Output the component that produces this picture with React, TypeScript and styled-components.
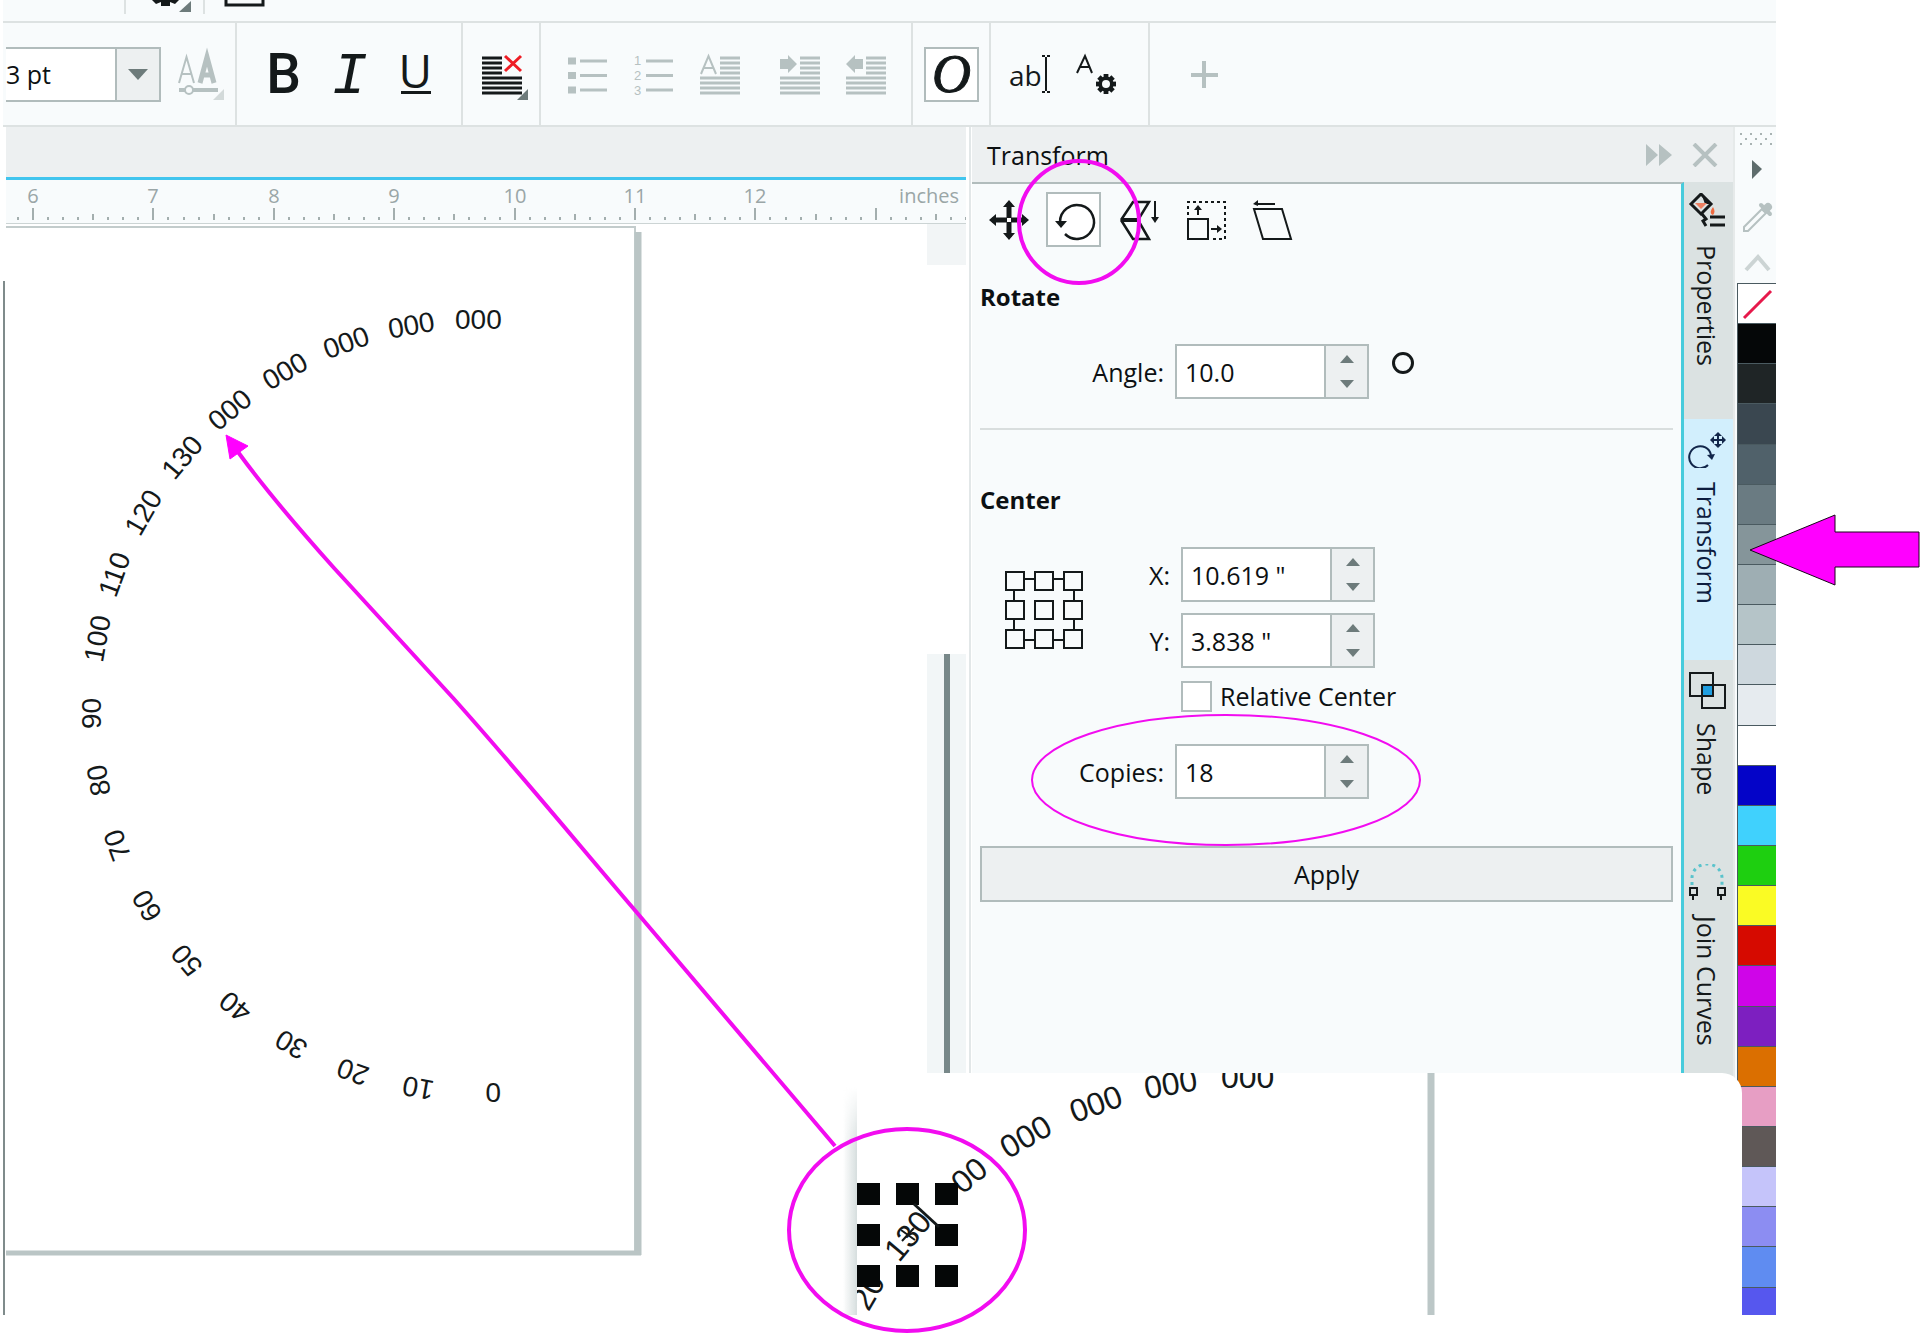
import React from "react";
import styled, { createGlobalStyle } from "styled-components";

const ink = "#14191a";
const muted = "#b6c1c1";
const line = "#dde2e2";
const surface = "#f8fbfc";
const chrome = "#edf0f1";
const edge = "#b1bcbc";
const sans = '"Open Sans", "Noto Sans", sans-serif';

const GlobalStyle = createGlobalStyle`
  *, *::before, *::after { box-sizing: border-box; }
  body { margin: 0; background: #fff; color: #0c1012; font: 25px/32px ${sans}; }
  button, input, select { font: inherit; color: inherit; margin: 0; padding: 0; border: 0; border-radius: 0; background: none; }
  svg { display: block; flex: none; }
`;

const Stage = styled.main`
  position: relative;
  height: 100vh;
  min-height: 1200px;
  overflow: hidden;
  padding: 0 144px 18px 3px;
`;

const Window = styled.div`
  display: flex;
  flex-direction: column;
  height: 100%;
`;

const TopBar = styled.div`
  display: flex;
  height: 23px;
  background: ${surface};
  border-bottom: 2px solid ${line};
`;

const TextBar = styled.div`
  display: flex;
  height: 104px;
  background: ${surface};
  border-bottom: 2px solid ${line};
`;

const Group = styled.div<{ $pad?: string; $last?: boolean }>`
  display: flex;
  align-items: center;
  gap: 12px;
  padding: 0 ${(p) => p.$pad ?? "19px"};
  border-right: ${(p) => (p.$last ? "0" : `2px solid ${line}`)};
`;

const SizeBox = styled.div`
  display: grid;
  grid-template-columns: 109px 44px;
  height: 55px;
  background: #fff;
  border: 2px solid ${edge};
  border-left: 0;
`;

const SizeSelect = styled.select`
  grid-area: 1 / 1 / 2 / 3;
  appearance: none;
  outline: 0;
`;

const SizeArrow = styled.span`
  grid-area: 1 / 2;
  display: flex;
  align-items: center;
  justify-content: center;
  background: ${chrome};
  border-left: 2px solid ${edge};
  pointer-events: none;
`;

const Tool = styled.button<{ $on?: boolean; $apart?: boolean }>`
  display: flex;
  align-items: center;
  justify-content: center;
  width: 55px;
  height: 55px;
  margin-right: -1px;
  margin-left: ${(p) => (p.$apart ? "14px" : "0")};
  color: ${ink};
  background: ${(p) => (p.$on ? "#fff" : "none")};
  box-shadow: ${(p) => (p.$on ? `inset 0 0 0 2px ${edge}` : "none")};
`;

const Glyph = styled.span<{ $face: string; $size: number; $weight?: number; $italic?: boolean; $bold?: boolean; $low?: boolean }>`
  padding-top: ${(p) => (p.$low ? "6px" : "0")};
  font-family: ${(p) => p.$face};
  font-size: ${(p) => p.$size}px;
  font-weight: ${(p) => p.$weight ?? 400};
  font-style: ${(p) => (p.$italic ? "italic" : "normal")};
  line-height: 54px;
  -webkit-text-stroke: ${(p) => (p.$bold ? "1px" : "0")} ${ink};
`;

const UnderGlyph = styled.span`
  width: 30px;
  height: 40px;
  border-bottom: 3px solid ${ink};
  font: 500 46px/32px ${sans};
  text-align: center;
  text-indent: -2px;
`;

const Work = styled.div`
  display: flex;
  flex: 1;
  min-height: 0;
`;

const Drawing = styled.section`
  display: flex;
  flex-direction: column;
  flex: 1;
  min-width: 0;
`;

const DocTabs = styled.div`
  height: 53px;
  margin-left: 3px;
  background: ${chrome};
  border-bottom: 3px solid #41c5ee;
`;

const Ruler = styled.div`
  height: 44px;
  margin-left: 3px;
  overflow: hidden;
  background: ${surface};
  border-bottom: 1px solid #ccd4d4;
`;

const CanvasRow = styled.div`
  display: flex;
  flex: 1;
  min-height: 0;
`;

const CanvasView = styled.div`
  flex: 1;
  min-width: 0;
  overflow: hidden;
`;

const ScrollTrack = styled.div`
  display: flex;
  flex-direction: column;
  justify-content: space-between;
  width: 39px;
`;

const ScrollCap = styled.div`
  height: 41px;
  background: #f2f5f6;
`;

const ScrollTail = styled.div`
  display: flex;
  justify-content: center;
  height: 661px;
  padding-bottom: 242px;
  background: linear-gradient(#f2f6f7 419px, #fff 419px);
`;

const ScrollThumb = styled.div`
  width: 6px;
  height: 100%;
  background: #788889;
`;

const Splitter = styled.div`
  width: 6px;
  background: linear-gradient(90deg, #fff 3px, #e2e7e8 3px, #e2e7e8 5px, #fff 5px);
`;

const Docker = styled.aside`
  display: flex;
  flex-direction: column;
  width: 761px;
`;

const DockHead = styled.header`
  display: flex;
  align-items: center;
  height: 55px;
  padding: 0 15px 0 15px;
  background: ${chrome};
`;

const DockTitle = styled.h1`
  flex: 1;
  margin: 0;
  font: inherit;
`;

const HeadButton = styled.button`
  display: flex;
  margin-left: 20px;
`;

const DockBody = styled.div`
  display: flex;
  flex: 1;
  min-height: 0;
`;

const Panel = styled.form`
  display: flex;
  flex-direction: column;
  flex: 1;
  padding: 8px 8px 0;
  background: ${surface};
  border-top: 2px solid ${edge};
  border-right: 3px solid #47cbdc;
`;

const ToolRow = styled.div`
  display: flex;
  gap: 12px;
`;

const Heading = styled.h2<{ $top: number }>`
  margin: ${(p) => p.$top}px 0 31px;
  font-size: 24px;
  line-height: 32px;
  font-weight: 700;
`;

const Field = styled.div`
  display: flex;
  align-items: center;
  gap: 11px;
`;

const FieldLabel = styled.label<{ $width: number }>`
  width: ${(p) => p.$width}px;
  text-align: right;
`;

const SpinBox = styled.div`
  display: grid;
  grid-template-columns: 1fr 43px;
  width: 194px;
  height: 55px;
  background: #fff;
  border: 2px solid ${edge};
`;

const SpinInput = styled.input`
  width: 100%;
  min-width: 0;
  padding-left: 8px;
  outline: 0;
`;

const SpinButtons = styled.div`
  display: grid;
  grid-template-rows: 1fr 1fr;
  background: ${chrome};
  border-left: 2px solid ${edge};
`;

const SpinButton = styled.button`
  display: flex;
  align-items: center;
  justify-content: center;
`;

const Degree = styled.span`
  width: 22px;
  height: 22px;
  margin: 0 0 18px 12px;
  border: 3px solid ${ink};
  border-radius: 50%;
`;

const Divider = styled.hr`
  width: 100%;
  height: 2px;
  margin: 29px 0 0;
  border: 0;
  background: #d9dede;
`;

const CenterRow = styled.div`
  display: flex;
  align-items: center;
  padding-left: 25px;
`;

const CenterFields = styled.div`
  display: flex;
  flex-direction: column;
  gap: 11px;
`;

const CheckRow = styled.label`
  display: flex;
  align-items: center;
  gap: 8px;
  height: 32px;
  margin: 12px 0 32px 201px;
`;

const CheckBox = styled.input`
  appearance: none;
  width: 31px;
  height: 31px;
  background: #fff;
  border: 2px solid ${edge};
`;

const Apply = styled.button`
  height: 56px;
  margin-top: 47px;
  background: ${chrome};
  border: 2px solid ${edge};
`;

const TabStrip = styled.nav`
  display: flex;
  flex-direction: column;
  width: 49px;
  background: #dbe2e2;
`;

const SideTab = styled.button<{ $h: number; $on?: boolean }>`
  display: flex;
  flex-direction: column;
  align-items: center;
  gap: 14px;
  height: ${(p) => p.$h}px;
  padding: 11px 4px 0 0;
  color: ${(p) => (p.$on ? "#0d1d3f" : ink)};
  background: ${(p) => (p.$on ? "#d2effd" : "#dbe2e2")};
`;

const SideText = styled.span`
  writing-mode: vertical-rl;
  line-height: 32px;
`;

const Palette = styled.div`
  display: flex;
  flex-direction: column;
  width: 43px;
  padding-left: 4px;
  background: linear-gradient(90deg, #e6eaea 2px, ${surface} 2px);
`;

const PaletteTools = styled.div`
  height: 156px;
`;

const Swatch = styled.button<{ $c: string; $part?: boolean }>`
  flex: ${(p) => (p.$part ? 28 : 40)} 1 0;
  overflow: hidden;
  background: ${(p) => p.$c};
  border-top: 1px solid #4a5a60;
  border-left: 1px solid #4a5a60;
`;

const Inset = styled.div`
  position: absolute;
  left: 857px;
  bottom: 18px;
  width: 885px;
  height: 242px;
  overflow: hidden;
  background: #fff;
  border-radius: 18px 20px 0 0;
`;

const InsetShadow = styled.div`
  position: absolute;
  left: 843px;
  bottom: 18px;
  width: 14px;
  height: 228px;
  background: linear-gradient(90deg, rgba(214, 222, 222, 0), #d6dede);
  mask-image: linear-gradient(transparent, #000 60px);
`;

const Notes = styled.svg`
  position: absolute;
  left: 0;
  top: 0;
  pointer-events: none;
`;

function Tri({ up }: { up?: boolean }) {
  return (
    <svg width="14" height="8" viewBox="0 0 14 8">
      <path d={up ? "M0 8 7 0l7 8z" : "M0 0h14L7 8z"} fill="#6d7b7b" />
    </svg>
  );
}

function Spin({ id, value, name }: { id: string; value: string; name: string }) {
  return (
    <SpinBox>
      <SpinInput id={id} defaultValue={value} />
      <SpinButtons>
        <SpinButton type="button" aria-label={`Increase ${name}`}><Tri up /></SpinButton>
        <SpinButton type="button" aria-label={`Decrease ${name}`}><Tri /></SpinButton>
      </SpinButtons>
    </SpinBox>
  );
}

const Box = ({ children }: { children: React.ReactNode }) => (
  <svg width="54" height="54" viewBox="0 0 54 54" fill="none" stroke={muted} strokeWidth="3">{children}</svg>
);

const paragraph = (from: number) =>
  `M${from} 11H47M${from} 16H47M${from} 21H47M${from} 26H47M7 31H47M7 36H47M7 41H47M7 46H47`;

const Cog = ({ x, y }: { x: number; y: number }) => (
  <g transform={`translate(${x} ${y})`} stroke="none" fill={ink}>
    {[0, 45, 90, 135].map((a) => (
      <rect key={a} x="-2.4" y="-10" width="4.8" height="20" transform={`rotate(${a})`} />
    ))}
    <circle r="7.6" />
    <circle r="4" fill={surface} />
  </g>
);

function Toolbar() {
  return (
    <TextBar>
      <Group $pad="8px 0 3px">
        <SizeBox>
          <SizeSelect aria-label="Font size" defaultValue="3 pt"><option>3 pt</option></SizeSelect>
          <SizeArrow>
            <svg width="20" height="11" viewBox="0 0 20 11"><path d="M0 0h20L10 11z" fill="#6d7b7b" /></svg>
          </SizeArrow>
        </SizeBox>
        <Tool aria-label="Variable font">
          <svg width="54" height="54" viewBox="2 0 54 54" fill="none" stroke={muted}>
            <path d="M7 36 14.500 10 22 36M10 27h9" strokeWidth="2" />
            <path d="M28 36 35 10l7 26M30 28h10" strokeWidth="5" />
            <path d="M7 43h39" strokeWidth="4" />
            <circle cx="17" cy="43" r="4" fill={surface} strokeWidth="2" />
            <path d="M52 42v11H41z" fill="#d3dada" stroke="none" />
          </svg>
        </Tool>
      </Group>
      <Group>
        <Tool aria-label="Bold"><Glyph $face="Roboto, sans-serif" $size={55} $weight={500}>B</Glyph></Tool>
        <Tool aria-label="Italic"><Glyph $face='"Liberation Mono", monospace' $size={60} $italic $low>I</Glyph></Tool>
        <Tool aria-label="Underline"><UnderGlyph>U</UnderGlyph></Tool>
      </Group>
      <Group $pad="11px">
        <Tool aria-label="Text alignment">
          <Box>
            <path d="M7 11H27M7 16H27M7 21H27M7 26H27M7 31H47M7 36H47M7 41H47M7 46H47" stroke={ink} />
            <path d="m30 9 16 15M46 9 30 24" stroke="#ee1c24" />
            <path d="M53 42v11H42z" fill="#6d7b7b" stroke="none" />
          </Box>
        </Tool>
      </Group>
      <Group>
        <Tool aria-label="Bulleted list">
          <Box>
            <path d="M7 14h8M7 28.500h8M7 43h8" strokeWidth="7" />
            <path d="M19 14h27M19 28.500h27M19 43h27" />
          </Box>
        </Tool>
        <Tool aria-label="Numbered list">
          <Box>
            <g fill={muted} stroke="none" fontFamily="Liberation Sans" fontSize="13">
              <text x="7" y="18">1</text><text x="7" y="33">2</text><text x="7" y="48">3</text>
            </g>
            <path d="M19 14h27M19 28.500h27M19 43h27" />
          </Box>
        </Tool>
        <Tool aria-label="Drop cap">
          <Box><path d={paragraph(27)} /><path d="M8 27 15.500 9 23 27M11 21h9" strokeWidth="2" /></Box>
        </Tool>
        <Tool aria-label="Increase indent" $apart>
          <Box><path d={paragraph(27)} /><path d="M7 12h8V8l9 9-9 9v-4H7z" fill={muted} stroke="none" /></Box>
        </Tool>
        <Tool aria-label="Decrease indent">
          <Box><path d={paragraph(27)} /><path d="M24 12h-8V8l-9 9 9 9v-4h8z" fill={muted} stroke="none" /></Box>
        </Tool>
      </Group>
      <Group $pad="11px">
        <Tool aria-label="OpenType" $on><Glyph $face='"Liberation Serif", serif' $size={54} $italic $bold>O</Glyph></Tool>
      </Group>
      <Group $pad="26px 0 11px">
        <Tool aria-label="Edit text">
          <Box>
            <text x="6" y="39" fontFamily="Open Sans" fontSize="28" fill={ink} stroke="none">ab</text>
            <path d="M43 10V44M39 9h3M44 9h3M39 45h3M44 45h3" stroke={ink} strokeWidth="2" />
          </Box>
        </Tool>
        <Tool aria-label="Text settings">
          <Box>
            <path d="M8 26 16 9l7 17M11 20h10" stroke={ink} strokeWidth="2" />
            <Cog x={37} y={37} />
          </Box>
        </Tool>
      </Group>
      <Group $pad="26px" $last>
        <Tool aria-label="Customize"><Box><path d="M14 28h27M27 14v27" strokeWidth="4" /></Box></Tool>
      </Group>
    </TextBar>
  );
}

const tens = ["0", "10", "20", "30", "40", "50", "60", "70", "80", "90", "100", "110"];
const pageLabels = [...tens, "120", "130", "000", "000", "000", "000", "000"];
// The enlarged view hides the first digit of the labels beside the selection handles.
const insetLabels = [...tens, "\u200720", "130", "\u200700", "000", "000", "000", "000"];

function Dial({ cx, cy, r, size, labels, from = 0 }: { cx: number; cy: number; r: number; size: number; labels: string[]; from?: number }) {
  const half = Math.round(size * 0.834);
  return (
    <g fontFamily="Liberation Sans, Arial, sans-serif" fontSize={size} fill={ink}>
      {labels.map((t, i) =>
        i < from ? null : (
          <text key={i} x={cx - half} y={cy - r + Math.round(size * 0.36)} transform={`rotate(${i * 10 - 180} ${cx} ${cy})`}>{t}</text>
        )
      )}
    </g>
  );
}

function RulerScale() {
  const ticks = Array.from({ length: 64 }, (_, i) => {
    const x = Math.round(27 + (i - 1) * 15.05);
    const k = (i - 1) % 8;
    return `M${x} ${k === 0 ? 28 : k === 4 ? 34 : 37}V40`;
  });
  return (
    <svg width="960" height="43" viewBox="0 0 960 43" fontFamily="Open Sans" fontSize="20" fill="#9aa6a7">
      <path d={ticks.join("")} stroke="#a3aeae" strokeWidth="2" />
      {[6, 7, 8, 9, 10, 11, 12].map((n, i) => (
        <text key={n} x={Math.round(27 + i * 120.4)} y="23" textAnchor="middle">{n}</text>
      ))}
      <text x="953" y="23" textAnchor="end">inches</text>
    </svg>
  );
}

const tools: [string, React.ReactNode][] = [
  ["Position", <g key="p"><path d="M28 10v34M11 27h34" strokeWidth="5" /><path d="m28 7 6 7H22zM28 47l6-7H22zM8 27l7-6v12zM48 27l-7-6v12z" fill={ink} stroke="none" /><path d="M26 25h4v4h-4z" fill="#fff" stroke="none" /></g>],
  ["Rotate", <g key="r"><path d="M13 29A17 17 0 1 1 18 41" strokeWidth="2.500" /><path d="M8 28h12l-6 7z" fill={ink} stroke="none" /></g>],
  ["Scale and mirror", <g key="m"><path d="M8 27 20 9h16L25 27l11 19H20L8 27" strokeWidth="2.500" /><path d="M8 27h16" strokeWidth="4" /><path d="M42 8v18" /><path d="M38 24h8l-4 6z" fill={ink} stroke="none" /></g>],
  ["Size", <g key="s"><path d="M9 26h20v20H9z" /><path d="M9 22V9h37v37H32" strokeDasharray="3 3" /><path d="M19 22v-7M32 36h6" strokeWidth="2" /><path d="m19 12 4 5h-8zM43 36l-5-4v8z" fill={ink} stroke="none" /></g>],
  ["Skew", <g key="k"><path d="M9 16h28l9 30H18z" /><path d="M11 11h19" /><path d="m8 11 5-4v6z" fill={ink} stroke="none" /></g>],
];

function Anchors() {
  const at = [1, 30, 59];
  return (
    <svg width="78" height="82" viewBox="0 -4 78 82" fill={surface} stroke={ink} strokeWidth="2">
      <path d="M9 8h60v61H9z" />
      {at.map((y) => at.map((x) => <rect key={`${x}-${y}`} x={x} y={y} width="18" height="18" />))}
    </svg>
  );
}

const tabIcons = {
  properties: (
    <svg width="38" height="38" viewBox="0 0 38 38" fill="none" stroke={ink} strokeWidth="3">
      <path d="m3 11 10-10 10 10-10 10z" /><path d="m13 0 11 11h-7z" fill={ink} stroke="none" />
      <path d="M7 10h12l-6 6z" fill="#ee8062" stroke="none" /><path d="M25 14c-3 4-3 7 0 8 2-2 2-5 0-8z" fill="#ee6a40" stroke="none" />
      <path d="M22 24h15M22 32h15" /><path d="m14 21 4 5-3 2 3 5" />
    </svg>
  ),
  transform: (
    <svg width="38" height="38" viewBox="0 0 38 38" fill="none" stroke="#12264a" strokeWidth="2">
      <path d="M20 35a11 11 0 1 1 3-10" /><path d="m19 25 8-1-3 6z" fill="#12264a" stroke="none" />
      <path d="M30 4v12M24 10h12" /><path d="m30 2 4 4h-8zM30 18l4-4h-8zM22 10l4-4v8zM38 10l-4-4v8z" fill="#12264a" stroke="none" />
    </svg>
  ),
  shape: (
    <svg width="38" height="38" viewBox="0 0 38 38" fill="none" stroke={ink} strokeWidth="2">
      <path d="M14 14h11v11H14z" fill="#1f9ee0" /><path d="M2 2h23v23H2zM14 14h23v23H14z" />
    </svg>
  ),
  join: (
    <svg width="38" height="38" viewBox="0 0 38 38" fill="none" stroke={ink} strokeWidth="2">
      <path d="M4 21V14a15 14 0 0 1 30 0v7" stroke="#5ac3cc" strokeWidth="3" strokeDasharray="3 4" />
      <path d="M2 24h7v7H2zM30 24h7v7h-7zM5 31v5M33 31v5" />
    </svg>
  ),
};

const swatches = [
  "#050708", "#1f2526", "#3a4750", "#50616a", "#6a7b82", "#85959a", "#9eaeb3", "#b5c4c8", "#ced8de", "#e6ebef", "#ffffff",
  "#0404c8", "#40d1fd", "#1ecf10", "#fafb24", "#d60a00", "#cf05e8", "#7d1fc0", "#db6f00", "#e79ec4", "#5f5857",
  "#c5c4fa", "#8c8df2", "#5f8cf1", "#5657ee",
];

const pink = "#f20cf0";

export default function App() {
  return (
    <Stage>
      <GlobalStyle />
      <Window>
        <TopBar>
          <svg width="280" height="21" viewBox="3 0 280 21">
            <path d="M125 0V14M204 0V14" stroke={line} strokeWidth="2" />
            <path d="M152 0h27l-4 4-5-2v4h-9V2l-5 2z" fill={ink} />
            <path d="M191 1v11h-12z" fill="#6d7b7b" />
            <path d="M226-2V5h37V-2" fill="none" stroke={ink} strokeWidth="3" />
          </svg>
        </TopBar>
        <Toolbar />
        <Work>
          <Drawing>
            <DocTabs />
            <Ruler><RulerScale /></Ruler>
            <CanvasRow>
              <CanvasView>
                <svg width="924" height="1092" viewBox="3 224 924 1092">
                  <path d="M4 281V1316" stroke="#7f8b8b" strokeWidth="2" />
                  <path d="M6 227H635V1251" fill="none" stroke="#c3cccc" strokeWidth="2" />
                  <path d="M638 232V1255" stroke="#bac5c5" strokeWidth="7" />
                  <path d="M6 1253H641" stroke="#bac5c5" strokeWidth="5" />
                  <Dial cx={478} cy={706} r={387} size={28} labels={pageLabels} />
                </svg>
              </CanvasView>
              <ScrollTrack><ScrollCap /><ScrollTail><ScrollThumb /></ScrollTail></ScrollTrack>
            </CanvasRow>
          </Drawing>
          <Splitter />
          <Docker>
            <DockHead>
              <DockTitle>Transform</DockTitle>
              <HeadButton aria-label="Collapse docker">
                <svg width="26" height="24" viewBox="0 0 26 24" fill={muted}><path d="m0 1 12 11L0 23zM13 1l13 11-13 11z" /></svg>
              </HeadButton>
              <HeadButton aria-label="Close docker">
                <svg width="26" height="24" viewBox="0 0 26 24" stroke={muted} strokeWidth="4"><path d="m2 1 22 22M24 1 2 23" /></svg>
              </HeadButton>
            </DockHead>
            <DockBody>
              <Panel>
                <ToolRow>
                  {tools.map(([name, art]) => (
                    <Tool key={name} type="button" aria-label={name} $on={name === "Rotate"}>
                      <svg width="54" height="54" viewBox="0 0 54 54" fill="none" stroke={ink} strokeWidth="2">{art}</svg>
                    </Tool>
                  ))}
                </ToolRow>
                <Heading $top={34}>Rotate</Heading>
                <Field>
                  <FieldLabel $width={184} htmlFor="angle">Angle:</FieldLabel>
                  <Spin id="angle" name="angle" value="10.0" />
                  <Degree />
                </Field>
                <Divider />
                <Heading $top={54}>Center</Heading>
                <CenterRow>
                  <Anchors />
                  <CenterFields>
                    <Field>
                      <FieldLabel $width={87} htmlFor="cx">X:</FieldLabel>
                      <Spin id="cx" name="X" value={'10.619 "'} />
                    </Field>
                    <Field>
                      <FieldLabel $width={87} htmlFor="cy">Y:</FieldLabel>
                      <Spin id="cy" name="Y" value={'3.838 "'} />
                    </Field>
                  </CenterFields>
                </CenterRow>
                <CheckRow><CheckBox type="checkbox" />Relative Center</CheckRow>
                <Field>
                  <FieldLabel $width={184} htmlFor="copies">Copies:</FieldLabel>
                  <Spin id="copies" name="copies" value="18" />
                </Field>
                <Apply type="button">Apply</Apply>
              </Panel>
              <TabStrip>
                <SideTab $h={237}>{tabIcons.properties}<SideText>Properties</SideText></SideTab>
                <SideTab $h={241} $on>{tabIcons.transform}<SideText>Transform</SideText></SideTab>
                <SideTab $h={193}>{tabIcons.shape}<SideText>Shape</SideText></SideTab>
                <SideTab $h={220}>{tabIcons.join}<SideText>Join Curves</SideText></SideTab>
              </TabStrip>
            </DockBody>
          </Docker>
          <Palette>
            <PaletteTools>
              <svg width="39" height="156" viewBox="0 0 39 156">
                <path d="M3 7h34M3 17h34" stroke="#a9b3b3" strokeWidth="2" strokeDasharray="2 8" />
                <path d="M8 12h28" stroke="#a9b3b3" strokeWidth="2" strokeDasharray="2 8" />
                <path d="m15 33 10 9-10 10z" fill="#5f6d6d" />
                <path d="M7 104v-4L25 82l4 4-18 18z" fill={surface} stroke={muted} strokeWidth="2" />
                <path d="m24 78 9 9" stroke={muted} strokeWidth="4" strokeLinecap="round" />
                <path d="m29 82 2-2" stroke={muted} strokeWidth="8" strokeLinecap="round" />
                <path d="m9 143 12-13 11 13" fill="none" stroke="#ccd4d4" strokeWidth="4" />
              </svg>
            </PaletteTools>
            <Swatch $c="#fff" aria-label="No color">
              <svg width="38" height="39" viewBox="0 0 38 39"><path d="M6 34 33 7" stroke="#e6194b" strokeWidth="3" /></svg>
            </Swatch>
            {swatches.map((c, i) => <Swatch key={c} $c={c} $part={i === swatches.length - 1} aria-label={`Color ${c}`} />)}
          </Palette>
        </Work>
      </Window>
      <InsetShadow />
      <Inset>
        <svg width="885" height="242" viewBox="857 1073 885 242">
          <path d="M1431 1073V1315" stroke="#bcc7c7" strokeWidth="7" />
          <Dial cx={1248} cy={1521} r={445} size={32} labels={insetLabels} from={12} />
          <g fill="#050707">
            {[1183, 1224, 1265].map((y, r) =>
              [857, 896, 935].map((x, c) => (r === 1 && c === 1 ? null : <rect key={`${x}-${y}`} x={x} y={y} width="23" height="22" />))
            )}
          </g>
          <path d="m914 1204 25 23" stroke={ink} strokeWidth="3" />
          <path d="m901 1230 14 10M914 1228l-12 13" stroke={ink} strokeWidth="2" />
        </svg>
      </Inset>
      <Notes width="1920" height="1333" viewBox="0 0 1920 1333" fill="none" stroke={pink} strokeWidth="4">
        <ellipse cx="1079" cy="222" rx="60" ry="61" />
        <ellipse cx="1226" cy="780" rx="194" ry="65" strokeWidth="2" />
        <ellipse cx="907" cy="1230" rx="118" ry="101" />
        <path d="M238 452C262 485 291 520 334 568L454 699C520 773 580 846 633 908L835 1146" />
        <path d="m226 435 22 11-18 13z" fill="#f0f" stroke="#f0f" strokeWidth="1" />
        <path d="m1750 550 85-35v17h84v35h-84v18z" fill="#f0f" stroke="#1a051a" strokeWidth="1" />
      </Notes>
    </Stage>
  );
}
